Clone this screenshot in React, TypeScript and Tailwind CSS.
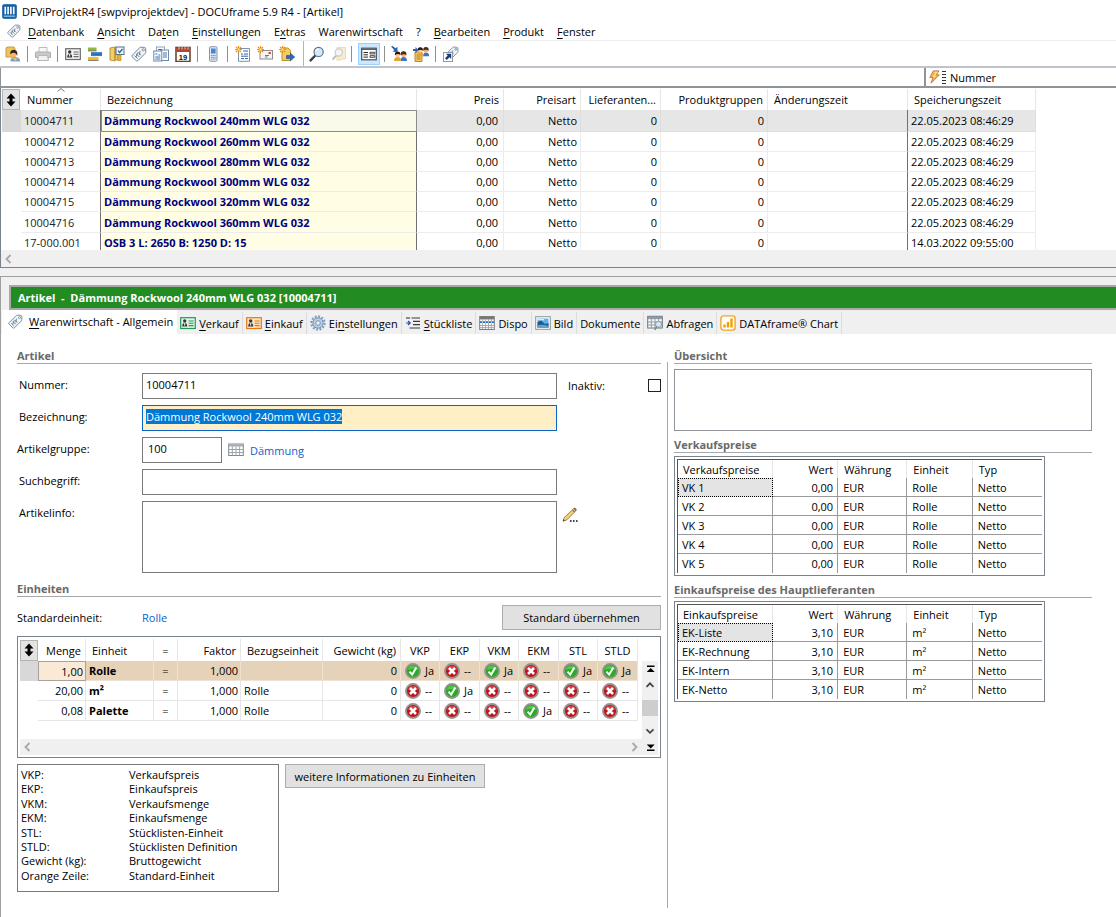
import React, { useEffect, useRef } from "react";

type IconProps = { name: string; size?: number };

const TagShape = () => (
  <g>
    <path d="M1.2 9.2 L8.6 1.8 Q9.2 1.2 10 1.2 L13.4 1.4 Q14.6 1.5 14.7 2.7 L14.8 6 Q14.8 6.8 14.2 7.4 L6.8 14.8 Q6 15.4 5.2 14.8 L1.2 10.8 Q0.5 10 1.2 9.2Z" fill="#eef4f9" stroke="#76889a" />
    <circle cx="12.3" cy="3.8" r="1.1" fill="#fff" stroke="#6b7c8c" strokeWidth=".8" />
    <path d="M3.5 9.6l3 3M5.2 7.9l3 3M6.9 6.2l3 3M5 11l1.5-4M8.4 9l.6-4" stroke="#62707e" strokeWidth=".9" fill="none" />
  </g>
);

const Star = () => (
  <g>
    <path d="M3.5 0v7M0 3.5h7M1 1l5 5M6 1l-5 5" stroke="#f08a14" strokeWidth="1.1" />
    <circle cx="3.5" cy="3.5" r="1.5" fill="#ffd35a" />
  </g>
);

const People = () => (
  <g>
    <path d="M9.500 15q0-4 3.200-4t3.300 4z" fill="#3b73c9" />
    <circle cx="12.500" cy="9" r="2.300" fill="#efb679" />
    <path d="M9.800 9.200Q9.300 5 12.600 5.200q3.300 0 2.800 4.200-2.300-2.400-5.600-.2z" fill="#4b2a12" />
    <path d="M3 15q0-4 3.500-4t3.700 4z" fill="#e2a33a" />
    <circle cx="6.600" cy="9" r="2.300" fill="#f6c98e" />
    <path d="M3.900 9.200Q3.500 5.400 6.600 5.400q3.200 0 2.800 3.800-2.300-2.200-5.500 0z" fill="#20140c" />
  </g>
);

const Card = ({ frame, fill }: { frame: string; fill: string }) => (
  <g>
    <rect x=".7" y="2.7" width="14.6" height="10.8" fill={fill} stroke={frame} strokeWidth="1.2" />
    <circle cx="4.7" cy="6" r="1.7" fill="#3a3432" />
    <path d="M2.2 11.4q0-3.4 2.5-3.4t2.5 3.4z" fill="#3a3432" />
    <path d="M4.7 8v2.6" stroke="#fff" />
    <path d="M8.6 6h5M8.6 8.3h5M8.6 10.6h5" stroke={frame} strokeWidth="1.1" />
  </g>
);

const glyphs: Record<string, React.ReactNode> = {
  app: (
    <g>
      <rect x=".5" y=".5" width="15" height="15" rx="2" fill="#1a5e9c" stroke="#2d75b5" />
      <path d="M3.5 3v8M6.5 3v8M9.5 3v8M12.5 3v8" stroke="#fff" strokeWidth="1.7" />
      <path d="M2 13h12" stroke="#8fc3ee" strokeWidth="1.4" />
    </g>
  ),
  tag: <TagShape />,
  user: (
    <g>
      <path d="M1 2l1-1h7l1 1.500v8.500H1z" fill="#ecc35c" stroke="#c79d3c" />
      <path d="M5.500 15.500q-.3-4.500 4.500-4.500 5 0 5.300 4.500z" fill="#7d9fd4" />
      <path d="M7.500 12l3 3 1.500-3z" fill="#f5c343" />
      <circle cx="8.800" cy="8" r="2.900" fill="#f2b678" />
      <path d="M5.400 8.600Q4.600 4 8.600 3.800q4.600 0 3.600 6Q11 6.600 8.800 6.800 6.600 6.600 5.400 8.600z" fill="#3b2210" />
    </g>
  ),
  printer: (
    <g>
      <path d="M4 6V1.5h8V6" fill="#f8f8f8" stroke="#bdbdbd" />
      <path d="M1.5 6h13q1 0 1 1v4.5H.5V7q0-1 1-1z" fill="#c9c9c9" stroke="#acacac" />
      <path d="M3.5 9.5h9l1 5h-11z" fill="#f1f1f1" stroke="#b7b7b7" />
    </g>
  ),
  card: <Card frame="#6a6a6a" fill="#f4f4f4" />,
  cardGreen: <Card frame="#1e9a58" fill="#e0f5e6" />,
  cardOrange: <Card frame="#e07b1b" fill="#ffe3bf" />,
  bars: (
    <g>
      <rect x="1" y="1.5" width="8.5" height="3.2" fill="#8dbb35" />
      <rect x="4" y="6.2" width="11" height="3.2" fill="#2a72c4" />
      <rect x="1" y="11" width="10.5" height="3.2" fill="#f5bd25" />
      <path d="M1 4.900h8.500M4 9.600h11M1 14.400h10.500" stroke="#444" strokeWidth=".7" />
    </g>
  ),
  door: (
    <g>
      <path d="M1 2l5-1v14l-5-1zM6 1.5h3v12.5H6z" fill="#f1ce68" stroke="#b98b25" strokeWidth=".9" />
      <rect x="7" y="1" width="8" height="7.5" fill="#eef4fb" stroke="#54708c" />
      <path d="M9 4.5l1.6 2L13.5 3" fill="none" stroke="#1f5c9a" strokeWidth="1.2" />
      <path d="M9 9h3v5.500H9z" fill="#e6b944" stroke="#b98b25" strokeWidth=".7" />
    </g>
  ),
  docs: (
    <g>
      <rect x="3.5" y="1" width="8" height="10" fill="#fff" stroke="#8ba3bb" />
      <rect x="7.5" y="4" width="8" height="10.5" fill="#fff" stroke="#6d8aa8" />
      <rect x=".8" y="5" width="8" height="10" fill="#f7fbff" stroke="#6d8aa8" />
      <path d="M2.3 8h2M5.3 9h2M2.3 11h5M2.3 13h5M10 7h4M10 9h4M10 11h4M5 3.5h4" stroke="#2f62a8" strokeWidth=".9" />
    </g>
  ),
  calendar: (
    <g>
      <rect x="1" y="1.5" width="14" height="14" fill="#fff" stroke="#6b4433" strokeWidth="1.6" />
      <path d="M1.5 2h13v4h-13z" fill="#b5442c" />
      <path d="M4 .5v3M7 .5v3M10 .5v3M13 .5v3" stroke="#ddd" strokeWidth=".9" />
      <text x="8" y="13.5" textAnchor="middle" fontSize="7.5" fontWeight="700" fontFamily="Liberation Sans, sans-serif" fill="#111">19</text>
    </g>
  ),
  phone: (
    <g>
      <rect x="4.5" y=".7" width="7.5" height="14.6" rx="1.2" fill="#dfe8f0" stroke="#8797a6" />
      <rect x="6" y="2.5" width="4.6" height="5" fill="#3e8ad6" />
      <path d="M6 9.5h4.6M6 11.3h4.6M6 13h4.6" stroke="#7e8a95" strokeDasharray="1.2 .5" />
    </g>
  ),
  newDoc: (
    <g>
      <path d="M3.5 2.5H14.5V15.3H3.5z" fill="#fff" stroke="#7b93ab" />
      <path d="M8 5h5M6 8h2M9 8h4M6 10.2h7M6 12.6h3M10 12.6h3" stroke="#2f62a8" />
      <Star />
    </g>
  ),
  newMail: (
    <g>
      <rect x="3" y="4.5" width="12.5" height="8.5" fill="#f4f4f4" stroke="#8c8c8c" />
      <path d="M8 9.5h4M8 11h2.5" stroke="#777" />
      <path d="M11.5 6h2.4v2h-2.4z" fill="#d34a3a" />
      <Star />
    </g>
  ),
  newArrow: (
    <g>
      <path d="M3 2h6l2.500 2.500V14.500H3z" fill="#f3cc63" stroke="#bd8f2b" />
      <path d="M7.500 9.400h4V7.200l4.200 3.800-4.200 3.800v-2.200h-4z" fill="#2e68bf" stroke="#1b4488" strokeWidth=".6" />
      <Star />
    </g>
  ),
  search: (
    <g>
      <path d="M6.3 9.5L1.6 14.4" stroke="#3a4148" strokeWidth="2.4" strokeLinecap="round" />
      <circle cx="9.6" cy="5.9" r="4.6" fill="#d3e9fa" stroke="#59728a" strokeWidth="1.2" />
      <path d="M6.9 5q.8-2 2.8-2.1" stroke="#fff" strokeWidth="1.2" fill="none" />
    </g>
  ),
  searchFolder: (
    <g opacity=".75">
      <path d="M6 1.5h8.5v11l-8.500 2z" fill="#f7e7bd" stroke="#e3cf9d" />
      <circle cx="7.8" cy="6.5" r="3.6" fill="#f1f3f4" stroke="#b9bcbe" strokeWidth="1.2" />
      <path d="M5 9.600L1.600 13.600" stroke="#aaaaaa" strokeWidth="2" />
    </g>
  ),
  form: (
    <g>
      <rect x=".7" y="2.200" width="14.6" height="11.6" fill="#fff" stroke="#474f57" strokeWidth="1.2" />
      <path d="M1 3.400h14" stroke="#474f57" />
      <path d="M2.500 6.500h4.500M2.500 8.800h4.500M2.500 11.100h4.500" stroke="#2b2b2b" />
      <path d="M9 6.300h4.800v1.600H9zM9 9.700h4.800v1.600H9z" fill="#fff" stroke="#333" strokeWidth=".9" />
    </g>
  ),
  peopleIn: (
    <g>
      <People />
      <path d="M0 .6L1.600 0 4.600 2.200 6.400.8 6.600 6.200 1.600 5.400 3.200 4z" fill="#2e62b5" />
    </g>
  ),
  peopleDoc: (
    <g>
      <path d="M2 6h7v9.500H2z" fill="#f1cb63" stroke="#b88b2a" />
      <path d="M3.500 9h4M3.500 11h4M3.500 13h4" stroke="#937024" strokeWidth=".8" />
      <g transform="translate(1 -4) scale(.95)"><People /></g>
      <path d="M0 3h2.500V1l3 3-3 3V5H0z" fill="#2e62b5" />
    </g>
  ),
  tagLink: (
    <g>
      <g transform="translate(2 0) scale(.88)"><TagShape /></g>
      <rect x=".5" y="6.500" width="9" height="9" fill="#fff" stroke="#999" />
      <path d="M3 7.800h5.200V13l-1.700-1.700L3.800 14 2 12.200l2.700-2.700z" fill="#123f8c" />
    </g>
  ),
  bolt: (
    <g>
      <path d="M6 1h6.500L9.500 5.500h3.500L3.500 15l2-6.500H2z" fill="#f5b64c" stroke="#b8643a" strokeWidth=".9" />
      <path d="M7.500 2.500h2.500L6.500 7.500h2" stroke="#ffe98f" fill="none" strokeWidth="1.200" />
    </g>
  ),
  gear: (
    <g>
      <circle cx="8" cy="8" r="6.600" fill="none" stroke="#7f9dbb" strokeWidth="2.200" strokeDasharray="1.900 1.550" />
      <circle cx="8" cy="8" r="5.200" fill="#b9cee2" stroke="#7693b0" />
      <circle cx="8" cy="8" r="2.300" fill="#f0f0f0" stroke="#7693b0" />
    </g>
  ),
  list: (
    <g>
      <path d="M6.500 3h8.500M8 6.400h7M8 9.600h7M4.500 13h10.500" stroke="#3a3a3a" strokeWidth="1.100" />
      <path d="M1 3h4" stroke="#3a3a3a" strokeWidth="1.100" />
      <path d="M1 8h3.500M3 6l2.200 2L3 10" stroke="#2851b5" strokeWidth="1.200" fill="none" />
    </g>
  ),
  dispo: (
    <g>
      <rect x=".7" y="1.500" width="14.600" height="13" fill="#fff" stroke="#7c7c7c" />
      <path d="M1 2h14v2.400H1z" fill="#777" />
      <path d="M1 10.500h14M1 12.600h14M3.700 4v10M6.600 4v10M9.500 4v10M12.400 4v10" stroke="#999" strokeWidth=".8" />
      <path d="M1 7.200h14" stroke="#2476c5" strokeWidth="1.800" strokeDasharray="2 1" />
    </g>
  ),
  image: (
    <g>
      <rect x=".7" y="1.700" width="14.600" height="12.600" fill="#fff" stroke="#8b939b" />
      <rect x="2.500" y="3.500" width="11" height="9" fill="#62b2e8" />
      <path d="M2.500 7l3.500-1.500 4 3.500 3.500-1v4.500h-11z" fill="#235a8c" />
      <path d="M2.500 10.500q5-1.500 11 .5v1.500h-11z" fill="#5fa4c8" />
      <path d="M3 4.700h6" stroke="#fff" />
    </g>
  ),
  table: (
    <g>
      <rect x=".7" y="2" width="14.600" height="11.500" fill="#fff" stroke="#7f8790" />
      <path d="M1 2.500h14v2H1z" fill="#a4abb2" />
      <path d="M1 7.500h14M1 10.500h14M4.300 4.500v9M8 4.500v9M11.600 4.500v9" stroke="#9da4ab" />
    </g>
  ),
  tableSearch: (
    <g>
      <rect x=".7" y="1.300" width="14.600" height="11.700" fill="#f6f8fa" stroke="#68747f" />
      <path d="M1 1.800h14v2.300H1z" fill="#8f9ba6" />
      <path d="M1 7h14M1 10h14M4.300 4v9M8 4v9M11.600 4v9" stroke="#8f9ba6" />
      <circle cx="11.500" cy="9.300" r="3" fill="#d5e6f4" stroke="#8897a5" />
      <path d="M9.700 11.600l-2 3.200" stroke="#7c8792" strokeWidth="1.600" />
    </g>
  ),
  chart: (
    <g>
      <rect x=".9" y=".9" width="14.200" height="14.200" rx="2.500" fill="#fff" stroke="#f0a81c" strokeWidth="1.400" />
      <path d="M4.500 12.500V9.500M8 12.500V7M11.500 12.500V3.500" stroke="#f0a000" strokeWidth="2.400" />
    </g>
  ),
  pencil: (
    <g>
      <path d="M1 14.200l1.200-3.600L11.800 1.500l2.200 2.100-9.400 9.500z" fill="#f6cf72" stroke="#8a6a3a" strokeWidth=".8" />
      <path d="M11.800 1.500q1-.9 1.900 0t.3 2.100z" fill="#e25563" stroke="#9c3c48" strokeWidth=".6" />
      <path d="M10.400 2.900l2.200 2.100" stroke="#4f8f5f" strokeWidth="1.300" />
      <path d="M1 14.200l.7-1.900 1.200 1.200z" fill="#333" />
      <path d="M8 14h1.600M11 14h1.600M14 14h1.600" stroke="#111" strokeWidth="1.500" />
    </g>
  ),
  yes: (
    <g>
      <circle cx="8" cy="8" r="7" fill="#25ad1c" stroke="#929292" strokeWidth="1.900" />
      <path d="M2.800 7a5.300 5.300 0 0 1 10.400 0q-5-2-10.400 0z" fill="#7bd873" opacity=".55" />
      <path d="M4.500 8.600l2.700 3L11.300 4.600" fill="none" stroke="#fff" strokeWidth="2" />
    </g>
  ),
  no: (
    <g>
      <circle cx="8" cy="8" r="7" fill="#c4121a" stroke="#929292" strokeWidth="1.900" />
      <path d="M2.800 7a5.300 5.300 0 0 1 10.400 0q-5-2-10.400 0z" fill="#ea8084" opacity=".4" />
      <path d="M5 5l6 6M11 5l-6 6" stroke="#fff" strokeWidth="2.500" />
    </g>
  ),
  updown: <path d="M8 1.500l4.500 5H9.500v3h3L8 14.500l-4.500-5h3v-3h-3z" fill="#000" />,
  left: <path d="M9.500 4L5.500 8l4 4" fill="none" stroke="#a8a8a8" strokeWidth="1.800" />,
  right: <path d="M6.500 4l4 4-4 4" fill="none" stroke="#a8a8a8" strokeWidth="1.800" />,
  up: <path d="M4.500 9.800L8 6.300l3.500 3.500" fill="none" stroke="#444" strokeWidth="1.700" />,
  down: <path d="M4.500 6.300L8 9.800l3.500-3.500" fill="none" stroke="#444" strokeWidth="1.700" />,
  first: <path d="M5 4.500h7.500v1.600H5zM8.700 7l4 4h-8z" fill="#000" />,
  last: <path d="M5 12h7.500v-1.600H5zM8.700 9.500l4-4h-8z" fill="#000" />,
};

const Icon = ({ name, size = 16 }: IconProps) => (
  <svg viewBox="0 0 16 16" width={size} height={size} className="block shrink-0" aria-hidden="true">
    {glyphs[name]}
  </svg>
);

/* Label with its access key underlined; the key follows an ampersand. */
const Mnemonic = ({ text }: { text: string }) => {
  const at = text.indexOf("&");
  if (at < 0) return <span>{text}</span>;
  return (
    <span>
      {text.slice(0, at)}
      <u className="underline-offset-2">{text[at + 1]}</u>
      {text.slice(at + 2)}
    </span>
  );
};

const menus = ["&Datenbank", "&Ansicht", "Da&ten", "&Einstellungen", "E&xtras", "Warenwirtschaft", "?", "&Bearbeiten", "&Produkt", "&Fenster"];

const divider = "ml-1.5 mr-[7px] h-4 w-px bg-[#8f8f8f]";
const tightDivider = "ml-1 mr-1.5 h-4 w-px bg-[#8f8f8f]";
const fullDivider = "ml-2 mr-[5px] h-full w-px bg-[#b5b5b5]";

const toolGroups: { before?: string; items: { name: string; label: string }[] }[] = [
  { items: [{ name: "user", label: "Benutzer" }] },
  { before: divider, items: [{ name: "printer", label: "Drucken" }] },
  {
    before: divider,
    items: [
      { name: "card", label: "Adressen" },
      { name: "bars", label: "Projekte" },
      { name: "door", label: "Aufgaben" },
      { name: "tag", label: "Artikel" },
      { name: "docs", label: "Dokumente" },
      { name: "calendar", label: "Kalender" },
    ],
  },
  { before: divider, items: [{ name: "phone", label: "Telefon" }] },
  {
    before: divider,
    items: [
      { name: "newDoc", label: "Neues Dokument" },
      { name: "newMail", label: "Neue E-Mail" },
      { name: "newArrow", label: "Neue Weiterleitung" },
    ],
  },
  {
    before: fullDivider,
    items: [
      { name: "search", label: "Suchen" },
      { name: "searchFolder", label: "Ordner durchsuchen" },
    ],
  },
  { before: tightDivider, items: [{ name: "form", label: "Formular" }] },
  {
    before: tightDivider,
    items: [
      { name: "peopleIn", label: "Zuordnen" },
      { name: "peopleDoc", label: "Dokument zuordnen" },
    ],
  },
  { before: divider, items: [{ name: "tagLink", label: "Artikel verknüpfen" }] },
];

const articles = [
  ["10004711", "Dämmung Rockwool 240mm WLG 032", "22.05.2023 08:46:29"],
  ["10004712", "Dämmung Rockwool 260mm WLG 032", "22.05.2023 08:46:29"],
  ["10004713", "Dämmung Rockwool 280mm WLG 032", "22.05.2023 08:46:29"],
  ["10004714", "Dämmung Rockwool 300mm WLG 032", "22.05.2023 08:46:29"],
  ["10004715", "Dämmung Rockwool 320mm WLG 032", "22.05.2023 08:46:29"],
  ["10004716", "Dämmung Rockwool 360mm WLG 032", "22.05.2023 08:46:29"],
  ["17-000.001", "OSB 3 L: 2650 B: 1250 D: 15", "14.03.2022 09:55:00"],
];

const tabs: { icon?: string; text: string }[] = [
  { icon: "cardGreen", text: "&Verkauf" },
  { icon: "cardOrange", text: "&Einkauf" },
  { icon: "gear", text: "Ei&nstellungen" },
  { icon: "list", text: "&Stückliste" },
  { icon: "dispo", text: "Dispo" },
  { icon: "image", text: "Bild" },
  { text: "Dokumente" },
  { icon: "tableSearch", text: "Abfragen" },
  { icon: "chart", text: "DATAframe® Chart" },
];

const units = [
  { menge: "1,00", einheit: "Rolle", bezug: "", flags: [true, false, true, false, true, true] },
  { menge: "20,00", einheit: "m²", bezug: "Rolle", flags: [false, true, false, false, false, false] },
  { menge: "0,08", einheit: "Palette", bezug: "Rolle", flags: [false, false, false, true, false, false] },
];

const legend = [
  ["VKP:", "Verkaufspreis"],
  ["EKP:", "Einkaufspreis"],
  ["VKM:", "Verkaufsmenge"],
  ["EKM:", "Einkaufsmenge"],
  ["STL:", "Stücklisten-Einheit"],
  ["STLD:", "Stücklisten Definition"],
  ["Gewicht (kg):", "Bruttogewicht"],
  ["Orange Zeile:", "Standard-Einheit"],
];

const SortCorner = () => (
  <button type="button" aria-label="Sortierung" className="flex h-[21px] w-[18px] items-center justify-center border border-[#b4b4b4] bg-[#e3e3e3]">
    <Icon name="updown" />
  </button>
);

const SectionTitle = ({ children }: { children: React.ReactNode }) => (
  <h2 className="border-b border-[#a8a8a8] text-[11px] leading-[15px] font-bold text-[#696969]">{children}</h2>
);

const ArticleList = () => (
  <section className="border-b border-l border-[#7a828c] bg-white">
    <div className="h-[162px] overflow-hidden pt-px pl-px">
      <table className="h-[164px] w-full table-fixed border-separate border-spacing-0">
        <colgroup>
          <col className="w-[19px]" />
          <col className="w-[80px]" />
          <col className="w-[316px]" />
          <col className="w-[87px]" />
          <col className="w-[77px]" />
          <col className="w-[80px]" />
          <col className="w-[107px]" />
          <col className="w-[140px]" />
          <col className="w-[128px]" />
          <col />
        </colgroup>
        <thead>
          <tr className="h-[21px] *:border-r *:border-[#e6e6e6] *:font-normal">
            <td className="border-none p-0"><SortCorner /></td>
            <th className="relative px-1.5 text-left">
              Nummer
              <svg viewBox="0 0 8 4" className="absolute -top-px left-9 h-1 w-2" aria-hidden="true">
                <path d="M.5 3.500L4 .5l3.500 3" fill="none" stroke="#777" />
              </svg>
            </th>
            <th className="px-1.5 text-left">Bezeichnung</th>
            <th className="px-1 text-right">Preis</th>
            <th className="px-1 text-right">Preisart</th>
            <th className="px-1 text-right">Lieferanten...</th>
            <th className="px-1 text-right">Produktgruppen</th>
            <th className="px-1.5 text-left">Änderungszeit</th>
            <th className="px-1.5 text-left">Speicherungszeit</th>
            <td className="border-none" />
          </tr>
        </thead>
        <tbody>
          {articles.map(([nr, name, saved], i) => (
            <tr
              key={nr}
              className={
                i === 0
                  ? "*:border-r *:border-b *:border-[#dedede] *:bg-[#e6e6e6]"
                  : "*:border-r *:border-b *:border-[#ececec]"
              }
            >
              <td className={i === 0 ? "border-none! bg-[#d8d8d8]!" : "border-none!"} />
              <td className="border-r-[#707070]! px-[3px] text-[#222]">{nr}</td>
              <td
                className={
                  i === 0
                    ? "border! border-[#8c8c8c]! bg-[#fafaeb]! px-0.5 font-bold text-[#000080]"
                    : "border-r-[#707070]! bg-[#fffee4] px-[3px] font-bold text-[#000080]"
                }
              >
                {name}
              </td>
              <td className="px-[5px] text-right">0,00</td>
              <td className="px-[3px] text-right">Netto</td>
              <td className="px-[3px] text-right">0</td>
              <td className="px-[3px] text-right">0</td>
              <td className="border-r-[#707070]!" />
              <td className="px-[3px]">{saved}</td>
              <td className="border-none! bg-white!" />
            </tr>
          ))}
        </tbody>
      </table>
    </div>
    <div className="flex h-[17px] items-center bg-[#f0f0f0]">
      <Icon name="left" />
    </div>
  </section>
);

const boxed = "border border-[#7a7a7a] bg-white outline-none";

const ArticleForm = () => {
  const nameRef = useRef<HTMLInputElement>(null);
  useEffect(() => {
    nameRef.current?.focus();
    nameRef.current?.select();
  }, []);
  return (
    <div className="mt-[9px] grid grid-cols-[125px_minmax(0,1fr)_104px] gap-y-1.5">
      <label htmlFor="nummer" className="pt-1 pl-0.5">Nummer:</label>
      <input id="nummer" defaultValue="10004711" className={`${boxed} h-[26px] px-[3px] pb-1`} />
      <div className="flex items-center justify-between pb-0.5 pl-[11px]">
        <label htmlFor="inaktiv">Inaktiv:</label>
        <input id="inaktiv" type="checkbox" className="h-[13px] w-[13px] appearance-none border border-[#222] bg-white" />
      </div>

      <label htmlFor="bezeichnung" className="pt-1 pl-0.5">Bezeichnung:</label>
      <input
        id="bezeichnung"
        ref={nameRef}
        defaultValue="Dämmung Rockwool 240mm WLG 032"
        className="h-[26px] border border-[#0a63c9] bg-[#ffefc6] px-[3px] pb-1 outline-none selection:bg-[#0078d7] selection:text-white"
      />
      <span />

      <label htmlFor="gruppe" className="pt-1">Artikelgruppe:</label>
      <div className="flex items-center">
        <input id="gruppe" defaultValue="100" className={`${boxed} h-[26px] w-20 px-[5px] pb-1`} />
        <button type="button" aria-label="Artikelgruppe wählen" className="mr-1.5 ml-1.5"><Icon name="table" /></button>
        <a href="#gruppe" className="text-[#0b62cf]">Dämmung</a>
      </div>
      <span />

      <label htmlFor="suchbegriff" className="pt-1 pl-0.5">Suchbegriff:</label>
      <input id="suchbegriff" className={`${boxed} h-[26px] px-[3px]`} />
      <span />

      <label htmlFor="info" className="pt-1 pl-0.5">Artikelinfo:</label>
      <textarea id="info" className={`${boxed} block h-[72px] resize-none px-[3px]`} />
      <div className="pt-1.5 pl-[5px]">
        <button type="button" aria-label="Artikelinfo bearbeiten" className="block"><Icon name="pencil" /></button>
      </div>
    </div>
  );
};

const UnitGrid = () => (
  <div className="mt-1.5 border border-[#7a828c] bg-white p-0.5">
    <div className="flex">
      <table className="w-full table-fixed border-separate border-spacing-0 self-start">
        <colgroup>
          <col className="w-[18px]" />
          <col className="w-[48px]" />
          <col className="w-[68px]" />
          <col className="w-[24px]" />
          <col className="w-[63px]" />
          <col className="w-[82px]" />
          <col className="w-[78px]" />
          <col className="w-[39px]" />
          <col className="w-[40px]" />
          <col className="w-[39px]" />
          <col className="w-[40px]" />
          <col className="w-[39px]" />
          <col className="w-[40px]" />
          <col />
        </colgroup>
        <thead>
          <tr className="h-[22px] *:border-r *:border-[#e6e6e6] *:font-normal *:whitespace-nowrap">
            <td className="border-none p-0"><SortCorner /></td>
            <th className="px-1 text-right">Menge</th>
            <th className="px-1.5 text-left">Einheit</th>
            <th>=</th>
            <th className="px-1 text-right">Faktor</th>
            <th className="px-1.5 text-left">Bezugseinheit</th>
            <th className="px-1 text-right">Gewicht (kg)</th>
            {["VKP", "EKP", "VKM", "EKM", "STL", "STLD"].map((h) => (
              <th key={h}>{h}</th>
            ))}
            <td className="border-none" />
          </tr>
        </thead>
        <tbody>
          {units.map((u, i) => (
            <tr
              key={u.einheit}
              className={
                i === 0
                  ? "h-[20px] *:border-r *:border-b *:border-[#efe2d3] *:bg-[#e6d1b9]"
                  : "h-[20px] *:border-r *:border-b *:border-[#e6e6e6]"
              }
            >
              <td className={i === 0 ? "border-none! bg-[#d8d8d8]!" : "border-none!"} />
              <td className={i === 0 ? "border! border-[#a9a29b]! bg-[#fbe9d7]! px-0.5 text-right" : "px-0.5 text-right"}>{u.menge}</td>
              <td className="px-[3px] font-bold">{u.einheit}</td>
              <td className="text-center">=</td>
              <td className="px-0.5 text-right">1,000</td>
              <td className="px-[3px]">{u.bezug}</td>
              <td className="px-[3px] text-right">0</td>
              {u.flags.map((f, k) => (
                <td key={k} className="p-0">
                  <div className="flex items-center gap-1 pl-1">
                    <Icon name={f ? "yes" : "no"} />
                    {f ? "Ja" : "--"}
                  </div>
                </td>
              ))}
              <td className="border-none! bg-white!" />
            </tr>
          ))}
        </tbody>
      </table>
      <div className="mt-[22px] flex h-[78px] w-4 shrink-0 flex-col bg-[#f0f0f0]">
        <Icon name="first" />
        <Icon name="up" />
        <div className="mt-[7px] h-4 bg-[#cdcdcd]" />
        <div className="mt-auto"><Icon name="down" /></div>
      </div>
    </div>
    <div className="flex h-4 items-center bg-[#f0f0f0]">
      <Icon name="left" />
      <span className="flex-1" />
      <span><Icon name="right" /></span>
      <Icon name="last" />
    </div>
  </div>
);

const PriceTable = ({ title, names, value, unit }: { title: string; names: string[]; value: string; unit: string }) => (
  <div className="mt-[3px] mr-[47px] border border-[#7a828c] bg-white p-0.5">
    <table className="w-full table-fixed border-separate border-spacing-0 border-t border-l border-[#555]">
      <colgroup>
        <col className="w-[26%]" />
        <col className="w-[18%]" />
        <col className="w-[19%]" />
        <col className="w-[18%]" />
        <col className="w-[19%]" />
      </colgroup>
      <thead>
        <tr className="h-[18px] *:border-r *:border-[#e6e6e6] *:font-normal">
          <th className="px-[5px] text-left">{title}</th>
          <th className="px-1 text-right">Wert</th>
          <th className="px-1.5 text-left">Währung</th>
          <th className="px-1.5 text-left">Einheit</th>
          <th className="border-none! px-1.5 text-left">Typ</th>
        </tr>
      </thead>
      <tbody>
        {names.map((n, i) => (
          <tr key={n} className={i < names.length - 1 ? "*:border-r *:border-b *:border-[#9a9a9a]" : "*:border-r *:border-[#9a9a9a]"}>
            <td className={i === 0 ? "h-[19px] border! border-dotted border-black! bg-[#e4e4e4] px-[3px]" : "h-[19px] px-1"}>{n}</td>
            <td className="px-1 text-right">{value}</td>
            <td className="px-[5px]">EUR</td>
            <td className="px-[5px]">{unit}</td>
            <td className="border-r-0! px-[5px]">Netto</td>
          </tr>
        ))}
      </tbody>
    </table>
  </div>
);

export default function App() {
  return (
    <div className="flex min-h-screen flex-col bg-[#f0f0f0] font-['Open_Sans','Noto_Sans',sans-serif] text-[11px] leading-[15px] text-black">
      <header className="bg-white">
        <div className="flex h-[22px] items-center gap-[5px] px-0.5">
          <Icon name="app" size={15} />
          <h1>DFViProjektR4 [swpviprojektdev] - DOCUframe 5.9 R4 - [Artikel]</h1>
        </div>
        <nav className="flex h-[19px] items-center border-b border-[#ededed] pl-[7px]">
          <Icon name="tag" size={14} />
          <div className="ml-[7px] flex gap-[13px]">
            {menus.map((m) => (
              <button key={m} type="button"><Mnemonic text={m} /></button>
            ))}
          </div>
        </nav>
        <div className="flex h-[27px] items-stretch border-b-2 border-[#c0c3c9] pl-[5px]">
          {toolGroups.map((group, g) => (
            <div key={g} className="flex items-center">
              {group.before && <span className={group.before} />}
              <div className="flex gap-1.5">
                {group.items.map((t) => (
                  <button
                    key={t.name}
                    type="button"
                    aria-label={t.label}
                    className={t.name === "form" ? "border border-[#99d1ff] bg-[#cce8ff] px-0.5 py-0.5" : "block"}
                  >
                    <Icon name={t.name} />
                  </button>
                ))}
              </div>
            </div>
          ))}
        </div>
        <div className="flex h-[20px] border-b-2 border-l border-[#8f949b]">
          <input aria-label="Suche" className="min-w-0 flex-1 px-1 outline-none" />
          <button type="button" className="flex w-[192px] items-center border-l-2 border-[#8f949b] pl-0.5">
            <Icon name="bolt" size={14} />
            <svg viewBox="0 0 4 15" className="mr-1 h-[15px] w-1" aria-hidden="true">
              <path d="M0 1.500h4M0 4.500h4M0 7.500h4M0 10.500h4M0 13.500h4" stroke="#333" />
            </svg>
            Nummer
          </button>
        </div>
      </header>

      <ArticleList />

      <main className="mt-2 flex flex-1 flex-col border-t border-l border-[#a0a0a0]">
        <div className="mt-2 ml-2 flex h-[25px] items-center border-2 border-r-0 border-[#a8a8a8] bg-[#228b22] pl-[7px] font-bold whitespace-pre text-white">
          {"Artikel  -  Dämmung Rockwool 240mm WLG 032 [10004711]"}
        </div>
        <div className="flex h-6 items-stretch pl-px" role="tablist">
          <button type="button" role="tab" aria-selected="true" className="flex items-center gap-1.5 bg-white pr-1 pb-px pl-1.5">
            <Icon name="tag" size={15} />
            <Mnemonic text="&Warenwirtschaft - Allgemein" />
          </button>
          {tabs.map((t) => (
            <button
              key={t.text}
              type="button"
              role="tab"
              aria-selected="false"
              className="mt-0.5 flex items-center gap-[3px] border-r border-[#dcdcdc] px-[3px]"
            >
              {t.icon && <Icon name={t.icon} />}
              <Mnemonic text={t.text} />
            </button>
          ))}
        </div>

        <div className="grid flex-1 grid-cols-[minmax(0,650fr)_minmax(0,425fr)] bg-white pt-[14px] pr-6 pb-[9px] pl-4">
          <div className="pr-1.5">
            <SectionTitle>Artikel</SectionTitle>
            <ArticleForm />
            <div className="mt-2">
              <SectionTitle>Einheiten</SectionTitle>
            </div>
            <div className="mt-2 flex items-center">
              <span className="w-[125px]">Standardeinheit:</span>
              <a href="#einheiten" className="flex-1 text-[#0b62cf]">Rolle</a>
              <button type="button" className="h-[25px] w-[159px] border border-[#adadad] bg-[#e1e1e1]">Standard übernehmen</button>
            </div>
            <UnitGrid />
            <div className="mt-1.5 flex items-start gap-1.5">
              <dl className="grid h-32 w-[262px] grid-cols-[108px_1fr] border border-[#7a7a7a] px-[3px] pt-[3px] pb-2">
                {legend.map(([k, v]) => (
                  <React.Fragment key={k}>
                    <dt className="leading-[14px]">{k}</dt>
                    <dd className="leading-[14px]">{v}</dd>
                  </React.Fragment>
                ))}
              </dl>
              <button type="button" className="h-6 w-[200px] border border-[#adadad] bg-[#e1e1e1]">weitere Informationen zu Einheiten</button>
            </div>
          </div>

          <div className="relative pl-[7px]">
            <span className="absolute top-3.5 bottom-0 left-0 w-px bg-[#a8a8a8]" />
            <SectionTitle>Übersicht</SectionTitle>
            <textarea aria-label="Übersicht" className="mt-[5px] block h-[62px] w-full resize-none border border-[#8f949b] bg-white outline-none" />
            <div className="mt-1.5">
              <SectionTitle>Verkaufspreise</SectionTitle>
            </div>
            <PriceTable title="Verkaufspreise" names={["VK 1", "VK 2", "VK 3", "VK 4", "VK 5"]} value="0,00" unit="Rolle" />
            <div className="mt-1.5">
              <SectionTitle>Einkaufspreise des Hauptlieferanten</SectionTitle>
            </div>
            <PriceTable title="Einkaufspreise" names={["EK-Liste", "EK-Rechnung", "EK-Intern", "EK-Netto"]} value="3,10" unit="m²" />
          </div>
        </div>
      </main>
    </div>
  );
}
